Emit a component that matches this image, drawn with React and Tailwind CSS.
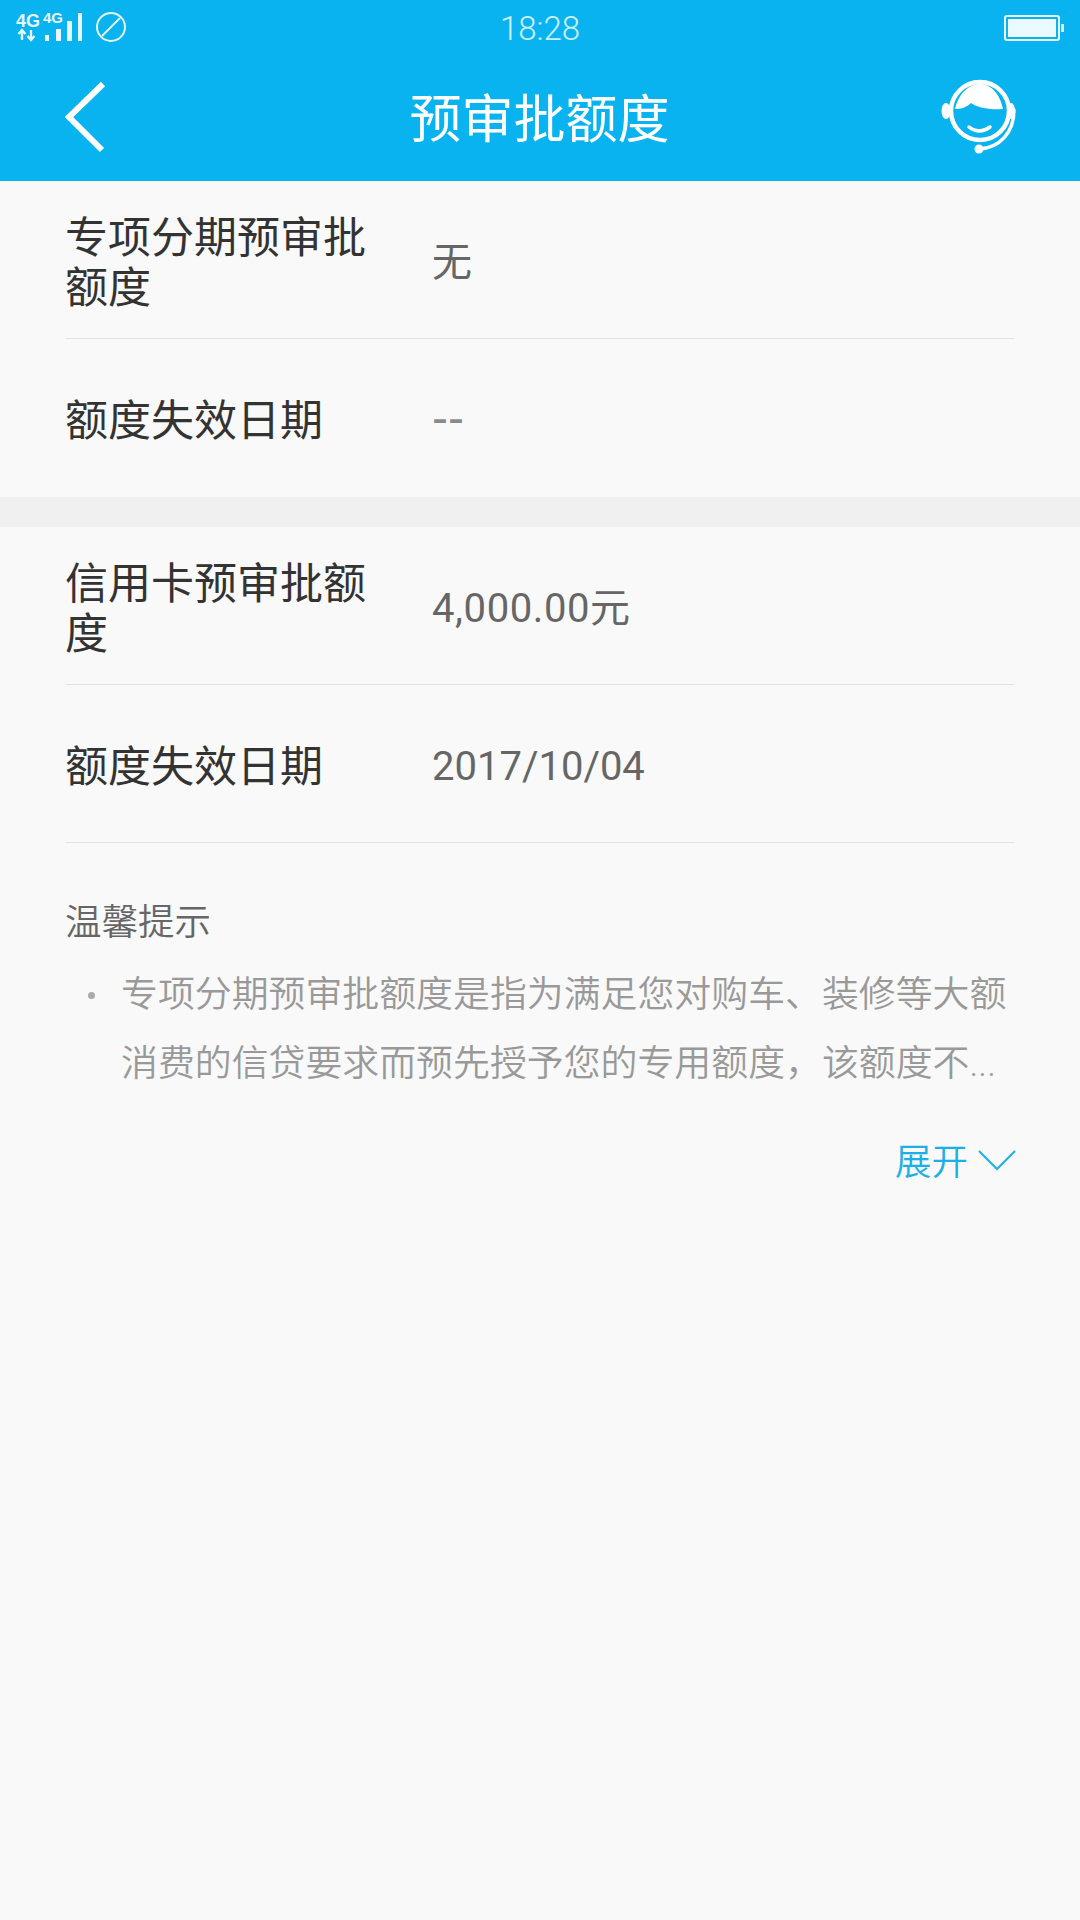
const InfoRow = ({ label, value, valueClass = 'text-[40px]', className = '' }) => (
  <div className={`mx-[66px] flex h-[158px] items-center border-b border-[#e2e2e2] pt-[6px] ${className}`}>
    <div className="-ml-[1px] w-[311px] shrink-0 text-[43px] font-normal leading-[50px] text-[#333333]">{label}</div>
    <div className={`ml-[56px] font-normal text-[#666666] ${valueClass}`}>{value}</div>
  </div>
);

const StatusBar = () => (
  <div className="grid h-[56px] grid-cols-[1fr_auto_1fr] items-center pl-[16px] pr-[16px] text-white">
    <svg width="112" height="36" viewBox="0 -4 112 36" className="-mt-[4px] opacity-90">
      <text x="0" y="15" fontSize="18" fontWeight="700" fill="#fff" fontFamily="Liberation Sans">4G</text>
      <text x="27" y="11" fontSize="15" fontWeight="700" fill="#fff" fontFamily="Liberation Sans">4G</text>
      <path d="M6 28v-9M2.5 22l3.5-4 3.5 4M15 18v9M11.5 24l3.5 4 3.5-4" stroke="#fff" strokeWidth="2.4" fill="none" />
      <rect x="29" y="23" width="4" height="6" fill="#fff" />
      <rect x="40" y="17" width="5" height="12" fill="#fff" />
      <rect x="51" y="9" width="5" height="20" fill="#fff" />
      <rect x="62" y="1" width="4" height="28" fill="#fff" />
      <circle cx="95" cy="15" r="14" fill="none" stroke="#fff" strokeWidth="2" />
      <path d="M86 24 L104 6" stroke="#fff" strokeWidth="2" />
    </svg>
    <div className="pt-[2px] text-[33px] text-white/80">18:28</div>
    <svg width="60" height="26" viewBox="0 0 60 26" className="justify-self-end">
      <rect x="1" y="1" width="54" height="24" rx="2" fill="none" stroke="#eafaff" strokeWidth="2" />
      <rect x="4" y="4" width="48" height="18" fill="#eafaff" />
      <rect x="57" y="9" width="3" height="8" fill="#d5f3ff" />
    </svg>
  </div>
);

const Header = () => (
  <div className="grid h-[125px] grid-cols-[1fr_auto_1fr] items-center px-[62px]">
    <svg width="42" height="72" viewBox="0 0 42 72" className="-mt-[4px] ml-[2px]">
      <path d="M39 3 L5 36 L38 69" fill="none" stroke="#fff" strokeWidth="6" />
    </svg>
    <div className="-ml-[1px] pt-[4px] text-center text-[52px] font-normal leading-[72px] text-white">预审批额度</div>
    <svg width="80" height="80" viewBox="0 0 80 80" className="-mr-[2px] -mt-[6px] justify-self-end">
      <circle cx="40" cy="35" r="29" fill="none" stroke="#fff" strokeWidth="4.5" />
      <path d="M15 33 C19 16 30 8 40 8 C51 8 60 18 63 33 C50 34 38 32 31 27 C26 32 20 33 15 33Z" fill="#fff" />
      <path d="M29 51 Q39 59 50 51" fill="none" stroke="#fff" strokeWidth="3.5" strokeLinecap="round" />
      <ellipse cx="6" cy="35" rx="4.5" ry="8" fill="#fff" />
      <ellipse cx="71" cy="35" rx="4" ry="8" fill="#fff" />
      <path d="M74 34 C74 56 60 72 39 73" fill="none" stroke="#fff" strokeWidth="3.5" strokeLinecap="round" />
      <circle cx="39" cy="73" r="4.5" fill="#fff" />
    </svg>
  </div>
);

export default function App() {
  return (
    <div className="flex h-[1920px] w-[1080px] flex-col overflow-hidden bg-[#f9f9f9] font-['Roboto','Noto_Sans_CJK_SC',sans-serif] font-[350]">
      <div className="h-[181px] shrink-0 bg-[#08b3f0]">
        <StatusBar />
        <Header />
      </div>

      <InfoRow label="专项分期预审批额度" value="无" />
      <InfoRow
        label="额度失效日期"
        value="--"
        valueClass="-mt-[6px] font-['Liberation_Sans'] text-[48px] leading-none opacity-75"
        className="border-b-0"
      />
      <div className="h-[30px] shrink-0 bg-[#f0f0f0]" />
      <InfoRow label="信用卡预审批额度" value="4,000.00元" valueClass="text-[40px] tracking-[0.6px]" />
      <InfoRow label="额度失效日期" value="2017/10/04" />

      <div className="ml-[65px] mr-[66px] mt-[55px] text-[36.5px] leading-[50px] text-[#666666]">温馨提示</div>

      <div className="relative mt-[12px] ml-[121px] mr-[66px]">
        <span className="absolute -left-[33px] top-[32px] h-[7px] w-[7px] rounded-full bg-[#aaaaaa]" />
        <p className="text-[36.9px] leading-[69px] text-[#999999]">
          专项分期预审批额度是指为满足您对购车、装修等大额消费的信贷要求而预先授予您的专用额度，该额度不...
        </p>
      </div>

      <div className="mr-[64px] mt-[40px] flex items-center justify-end gap-[10px] text-[#1cb0e6]">
        <span className="text-[36.5px] leading-[50px]">展开</span>
        <svg width="38" height="22" viewBox="0 0 38 22" className="-mt-[6px]">
          <path d="M1 2 L19 20 L37 2" fill="none" stroke="#1cb0e6" strokeWidth="2" />
        </svg>
      </div>
    </div>
  );
}
